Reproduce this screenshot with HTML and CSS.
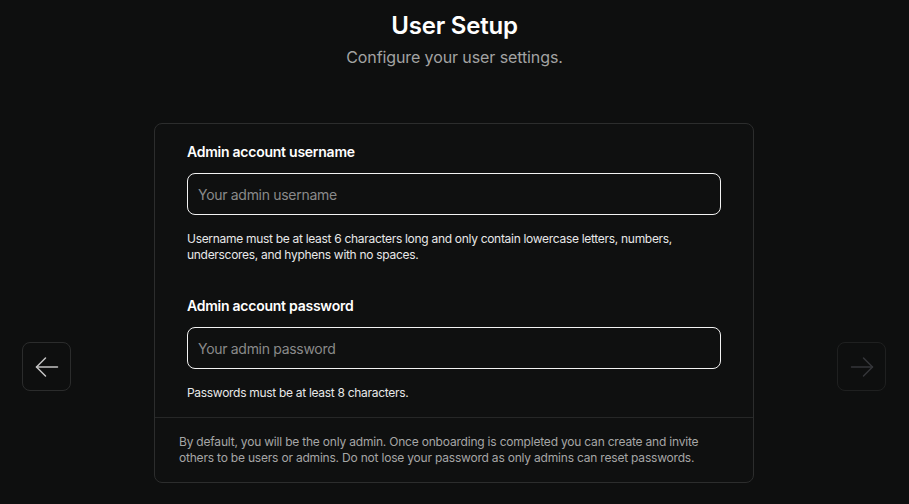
FILE: index.html
```html
<!DOCTYPE html>
<html>
<head>
<meta charset="utf-8">
<link rel="stylesheet" href="styles.css">
</head>
<body>
<div class="page">
  <header class="head">
    <h1 class="title">User Setup</h1>
    <p class="subtitle">Configure your user settings.</p>
  </header>
  <div class="stage">
    <button class="nav nav-back" aria-label="Back">
      <svg width="24" height="24" viewBox="0 0 24 24" fill="none" stroke="currentColor" stroke-width="1.5" stroke-linecap="round" stroke-linejoin="round"><path d="M22.5 12H1.5"/><path d="M10.5 21L1.5 12l9-9"/></svg>
    </button>
    <div class="card">
      <div class="card-body">
        <div class="field">
          <label class="label">Admin account username</label>
          <div class="input"><span class="placeholder">Your admin username</span></div>
          <p class="help">Username must be at least 6 characters long and only contain lowercase letters, numbers, underscores, and hyphens with no spaces.</p>
        </div>
        <div class="field field-2">
          <label class="label">Admin account password</label>
          <div class="input"><span class="placeholder">Your admin password</span></div>
          <p class="help help-2">Passwords must be at least 8 characters.</p>
        </div>
      </div>
      <div class="card-foot">
        <p class="note">By default, you will be the only admin. Once onboarding is completed you can create and invite others to be users or admins. Do not lose your password as only admins can reset passwords.</p>
      </div>
    </div>
    <button class="nav nav-next" aria-label="Next">
      <svg width="24" height="24" viewBox="0 0 24 24" fill="none" stroke="currentColor" stroke-width="1.5" stroke-linecap="round" stroke-linejoin="round"><path d="M1.5 12h21"/><path d="M13.5 3l9 9-9 9"/></svg>
    </button>
  </div>
</div>
</body>
</html>
```
FILE: styles.css
```css
* { box-sizing: border-box; }
html, body { margin: 0; padding: 0; background: #0e0f0f; }
body {
  font-family: Inter, "Open Sans", "Liberation Sans", sans-serif;
  color: #ffffff;
  width: 909px;
  height: 504px;
  overflow: hidden;
}
.page { display: flex; flex-direction: column; align-items: center; }
.head { text-align: center; padding-top: 11px; }
.title {
  margin: 0;
  font-size: 24px;
  line-height: 30px;
  font-weight: 600;
  letter-spacing: -0.2px;
}
.subtitle {
  margin: 5px 0 0;
  font-size: 16px;
  line-height: 22px;
  color: #a3a3a3;
  letter-spacing: -0.1px;
}
.stage {
  width: 909px;
  display: flex;
  align-items: flex-start;
  justify-content: space-between;
  padding: 0 23px 0 22px;
  margin-top: 55px;
}
.nav {
  width: 49px;
  height: 49px;
  border: 1.5px solid #2b2c2c;
  border-radius: 8px;
  background: transparent;
  display: flex;
  align-items: center;
  justify-content: center;
  padding: 0;
  margin-top: 219px;
}
.nav-back { color: #c4c4c4; }
.nav-next { color: #35363a; border-color: #1f2020; }
.card {
  width: 600px;
  height: 360px;
  border: 1px solid #2c2d2d;
  border-radius: 8px;
  background: #0f1010;
  display: flex;
  flex-direction: column;
}
.card-body { padding: 18px 32px 0 32px; border-bottom: 1px solid #262727; height: 294px; }
.field { display: flex; flex-direction: column; }
.field-2 { margin-top: 34px; }
.label {
  font-size: 14px;
  line-height: 20px;
  font-weight: 600;
  letter-spacing: -0.25px;
  color: #ffffff;
}
.input {
  margin-top: 11px;
  width: 534px;
  height: 42px;
  border: 1.5px solid #f2f2f2;
  border-radius: 8px;
  display: flex;
  align-items: center;
  padding: 0 10px;
}
.placeholder {
  font-size: 14px;
  color: #8a8a8a;
  letter-spacing: -0.3px;
}
.help {
  margin: 16px 0 0;
  font-size: 12px;
  line-height: 15.5px;
  color: #e8e8e8;
  letter-spacing: -0.3px;
}
.help-2 { margin-top: 16px; }
.card-foot { padding: 16px 24px 0 24px; }
.note {
  margin: 0;
  font-size: 12px;
  line-height: 16px;
  color: #a6a6a6;
  letter-spacing: -0.2px;
}
```
